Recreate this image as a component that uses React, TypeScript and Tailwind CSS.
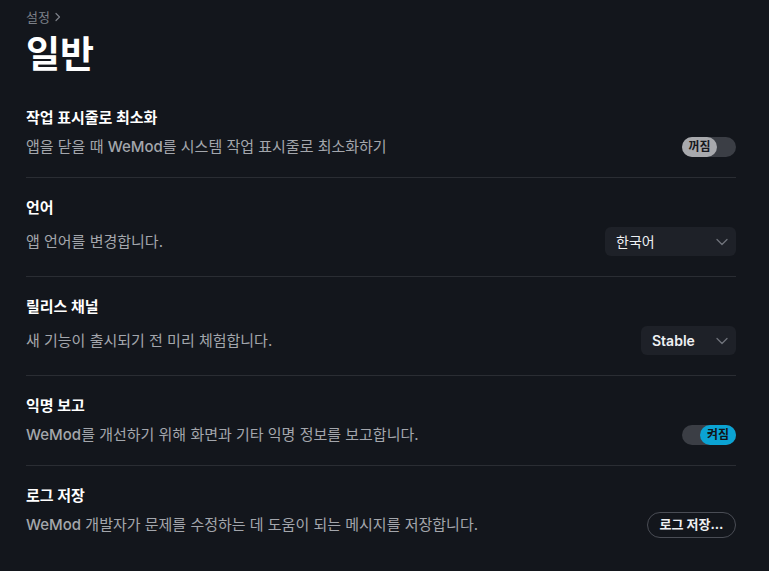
import React from "react";

const font = { fontFamily: '"Inter", "Noto Sans CJK KR", "Noto Sans", sans-serif' };

function Chevron() {
  return (
    <svg width="12" height="8" viewBox="0 0 12 8" fill="none" className="shrink-0">
      <path d="M1 1.5L6 6.5L11 1.5" stroke="#6f737b" strokeWidth="1.3" strokeLinecap="round" strokeLinejoin="round" />
    </svg>
  );
}

function Toggle({ on }: { on: boolean }) {
  return (
    <div className="relative h-[20px] w-[54px] rounded-full bg-[#3b3e45]">
      {on ? (
        <div className="absolute right-0 top-0 flex h-[20px] w-[36px] items-center justify-center rounded-full bg-[#0ba3d3] text-[12px] font-bold text-[#111318]">
          켜짐
        </div>
      ) : (
        <div className="absolute left-0 top-0 flex h-[20px] w-[35px] items-center justify-center rounded-full bg-[#a8a9ad] text-[12px] font-bold text-[#15171c]">
          꺼짐
        </div>
      )}
    </div>
  );
}

function Select({ label, width, bold }: { label: string; width: string; bold?: boolean }) {
  return (
    <div className={`flex h-[29px] ${width} items-center justify-between rounded-md bg-[#1e2128] pl-[11px] pr-[8px]`}>
      <span className={`text-[14px] text-[#eef0f3] ${bold ? "font-semibold" : ""}`}>{label}</span>
      <Chevron />
    </div>
  );
}

function Section({
  title,
  desc,
  control,
  last,
}: {
  title: string;
  desc: React.ReactNode;
  control: React.ReactNode;
  last?: boolean;
}) {
  return (
    <div className={`flex flex-col gap-[9px] pt-[20px] pb-[20px] ${last ? "" : "border-b border-[#2a2d33]"}`}>
      <div className="text-[15px] font-bold leading-[20px] text-white">{title}</div>
      <div className="flex items-center justify-between">
        <div className="text-[15px] leading-[20px] text-[#a3a6ac]">{desc}</div>
        {control}
      </div>
    </div>
  );
}

export default function App() {
  return (
    <div className="min-h-screen bg-[#13161c] pl-[26px] pr-[33px]" style={font}>
      <div className="flex items-center gap-[4px] pt-[8px] text-[13px] leading-[18px] text-[#7c8088]">
        <span>설정</span>
        <svg width="8" height="10" viewBox="0 0 8 10" fill="none">
          <path d="M2 1.5L5.5 5L2 8.5" stroke="#7c8088" strokeWidth="1.2" strokeLinecap="round" strokeLinejoin="round" />
        </svg>
      </div>
      <h1 className="mt-[7px] text-[37px] font-bold leading-[44px] text-white">일반</h1>
      <div className="mt-[11px]">
        <Section
          title="작업 표시줄로 최소화"
          desc={<>앱을 닫을 때 <span className="font-medium">WeMod</span>를 시스템 작업 표시줄로 최소화하기</>}
          control={<Toggle on={false} />}
        />
        <Section
          title="언어"
          desc="앱 언어를 변경합니다."
          control={<Select label="한국어" width="w-[131px]" />}
        />
        <Section
          title="릴리스 채널"
          desc="새 기능이 출시되기 전 미리 체험합니다."
          control={<Select label="Stable" width="w-[95px]" bold />}
        />
        <Section
          title="익명 보고"
          desc={<><span className="font-medium">WeMod</span>를 개선하기 위해 화면과 기타 익명 정보를 보고합니다.</>}
          control={<Toggle on={true} />}
        />
        <Section
          title="로그 저장"
          desc={<><span className="font-medium">WeMod</span> 개발자가 문제를 수정하는 데 도움이 되는 메시지를 저장합니다.</>}
          control={
            <button className="-my-[3px] flex h-[26px] w-[89px] items-center justify-center rounded-full border border-[#4a4d55] text-[13px] font-bold text-[#eef0f3]">
              로그 저장...
            </button>
          }
          last
        />
      </div>
    </div>
  );
}
